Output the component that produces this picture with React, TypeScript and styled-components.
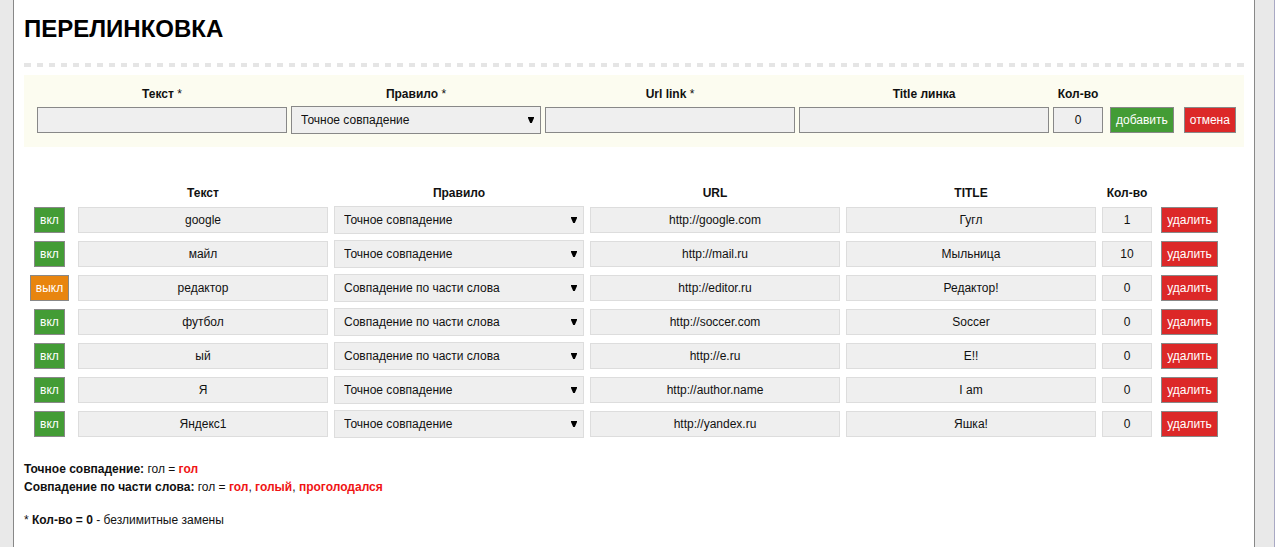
import React, { useId, useState } from "react";
import styled, { createGlobalStyle } from "styled-components";

const GlobalStyle = createGlobalStyle`
  *, *::before, *::after { box-sizing: border-box; }
  body {
    margin: 0;
    background: #e9e9e9;
    color: #111;
    font: 12px/18px "Liberation Sans", Arial, sans-serif;
  }
`;

const Frame = styled.div`
  display: flex;
  min-height: 100vh;
  padding: 0 19px 0 13px;
  border-right: 1px solid #a9a9c4;
`;

const Page = styled.main`
  flex: 1;
  min-width: 0;
  padding: 11px 10px 18px;
  background: #fff;
  border: solid #888;
  border-width: 0 1px;
`;

const Title = styled.h1`
  margin: 0;
  color: #000;
  font-size: 24px;
  line-height: 36px;
`;

const Divider = styled.hr`
  height: 4px;
  margin: 16px 0 8px;
  border: solid #e5e5e5;
  border-width: 0 1px;
  background: repeating-linear-gradient(90deg, #e5e5e5 0 6px, transparent 6px 12px);
`;

const AddForm = styled.form`
  display: grid;
  grid-template-columns: repeat(4, minmax(0, 1fr)) 50px 130px;
  gap: 4px;
  align-items: end;
  padding: 10px 7px 13px 13px;
  background: #fcfcf0;
`;

const Field = styled.div`
  display: flex;
  flex-direction: column;
  gap: 3px;
`;

const Label = styled.label`
  font-weight: bold;
  text-align: center;
  white-space: nowrap;
`;

const Required = styled.span`
  font-weight: normal;
`;

const Actions = styled.div`
  display: flex;
  gap: 10px;
  padding-left: 3px;
`;

const TextInput = styled.input<{ $strong?: boolean }>`
  display: block;
  width: 100%;
  height: 26px;
  margin: 1px 0;
  padding: 0 4px;
  border: 1px solid ${(p) => (p.$strong ? "#888" : "#ddd")};
  border-radius: 0;
  background: #efefef;
  color: #111;
  font: inherit;
  text-align: center;
`;

const SelectBox = styled.div`
  position: relative;
`;

const Select = styled.select<{ $strong?: boolean }>`
  display: block;
  width: 100%;
  height: 28px;
  padding: 0 20px 0 9px;
  appearance: none;
  border: 1px solid ${(p) => (p.$strong ? "#888" : "#ddd")};
  border-radius: 0;
  background: #efefef;
  color: #111;
  font: inherit;
`;

const Arrow = styled.svg`
  position: absolute;
  top: 11px;
  right: 7px;
  pointer-events: none;
`;

const tones = { green: "#439c35", red: "#dc2828", orange: "#e8850f" };

const Button = styled.button<{ $tone: keyof typeof tones }>`
  height: 26px;
  margin: 1px 0;
  padding: 0 5px;
  border: 1px solid #888;
  border-radius: 0;
  background: ${(p) => tones[p.$tone]};
  color: #fff;
  font: inherit;
  white-space: nowrap;
  cursor: pointer;
`;

const LinkTable = styled.table`
  width: calc(100% - 20px);
  margin-top: 36px;
  table-layout: fixed;
  border-collapse: collapse;

  th, td { padding: 3px; text-align: center; vertical-align: middle; }
  th { height: 20px; padding: 0 3px; line-height: 18px; }
  td:first-child, td:last-child { padding: 3px 0; }
`;

const Col = styled.col<{ $width?: number }>`
  width: ${(p) => (p.$width ? `${p.$width}px` : "auto")};
`;

const Note = styled.p`
  margin: 19px 0 15px;

  & + & { margin: 0; }
`;

const Sample = styled.strong`
  color: #f01414;
`;

const EXACT = "Точное совпадение";
const PARTIAL = "Совпадение по части слова";

const initialRows = [
  { on: true, text: "google", rule: EXACT, url: "http://google.com", title: "Гугл", count: "1" },
  { on: true, text: "майл", rule: EXACT, url: "http://mail.ru", title: "Мыльница", count: "10" },
  { on: false, text: "редактор", rule: PARTIAL, url: "http://editor.ru", title: "Редактор!", count: "0" },
  { on: true, text: "футбол", rule: PARTIAL, url: "http://soccer.com", title: "Soccer", count: "0" },
  { on: true, text: "ый", rule: PARTIAL, url: "http://e.ru", title: "Е!!", count: "0" },
  { on: true, text: "Я", rule: EXACT, url: "http://author.name", title: "I am", count: "0" },
  { on: true, text: "Яндекс1", rule: EXACT, url: "http://yandex.ru", title: "Яшка!", count: "0" },
];

type RuleSelectProps = { value: string; strong?: boolean; id?: string; "aria-labelledby"?: string };

function RuleSelect({ value, strong, ...rest }: RuleSelectProps) {
  return (
    <SelectBox>
      <Select $strong={strong} defaultValue={value} {...rest}>
        <option>{EXACT}</option>
        <option>{PARTIAL}</option>
      </Select>
      <Arrow width="6" height="6" viewBox="0 0 6 6" aria-hidden="true">
        <path d="M0 0h6v1L3.8 6H2.2L0 1z" fill="#000" />
      </Arrow>
    </SelectBox>
  );
}

function TextField({ label, required, value = "" }: { label: string; required?: boolean; value?: string }) {
  const id = useId();
  return (
    <Field>
      <Label htmlFor={id}>
        {label}
        {required && <Required> *</Required>}
      </Label>
      <TextInput id={id} $strong defaultValue={value} />
    </Field>
  );
}

export default function App() {
  const [rows, setRows] = useState(initialRows);

  return (
    <Frame>
      <GlobalStyle />
      <Page>
        <Title>ПЕРЕЛИНКОВКА</Title>
        <Divider />
        <AddForm onSubmit={(e) => e.preventDefault()}>
          <TextField label="Текст" required />
          <Field>
            <Label htmlFor="rule">
              Правило<Required> *</Required>
            </Label>
            <RuleSelect id="rule" strong value={EXACT} />
          </Field>
          <TextField label="Url link" required />
          <TextField label="Title линка" />
          <TextField label="Кол-во" value="0" />
          <Actions>
            <Button $tone="green" type="submit">добавить</Button>
            <Button $tone="red" type="reset">отмена</Button>
          </Actions>
        </AddForm>

        <LinkTable>
          <colgroup>
            <Col $width={51} />
            <Col />
            <Col />
            <Col />
            <Col />
            <Col $width={56} />
            <Col $width={69} />
          </colgroup>
          <thead>
            <tr>
              <th />
              <th id="col-text">Текст</th>
              <th id="col-rule">Правило</th>
              <th id="col-url">URL</th>
              <th id="col-title">TITLE</th>
              <th id="col-count">Кол-во</th>
              <th />
            </tr>
          </thead>
          <tbody>
            {rows.map((row) => (
              <tr key={row.text}>
                <td>
                  <Button
                    type="button"
                    $tone={row.on ? "green" : "orange"}
                    onClick={() => setRows(rows.map((r) => (r === row ? { ...r, on: !r.on } : r)))}
                  >
                    {row.on ? "вкл" : "выкл"}
                  </Button>
                </td>
                <td><TextInput aria-labelledby="col-text" defaultValue={row.text} /></td>
                <td><RuleSelect aria-labelledby="col-rule" value={row.rule} /></td>
                <td><TextInput aria-labelledby="col-url" defaultValue={row.url} /></td>
                <td><TextInput aria-labelledby="col-title" defaultValue={row.title} /></td>
                <td><TextInput aria-labelledby="col-count" defaultValue={row.count} /></td>
                <td>
                  <Button type="button" $tone="red" onClick={() => setRows(rows.filter((r) => r !== row))}>
                    удалить
                  </Button>
                </td>
              </tr>
            ))}
          </tbody>
        </LinkTable>

        <Note>
          <strong>Точное совпадение:</strong> гол = <Sample>гол</Sample>
          <br />
          <strong>Совпадение по части слова:</strong> гол = <Sample>гол</Sample>, <Sample>голый</Sample>,{" "}
          <Sample>проголодался</Sample>
        </Note>
        <Note>
          * <strong>Кол-во = 0</strong> - безлимитные замены
        </Note>
      </Page>
    </Frame>
  );
}
